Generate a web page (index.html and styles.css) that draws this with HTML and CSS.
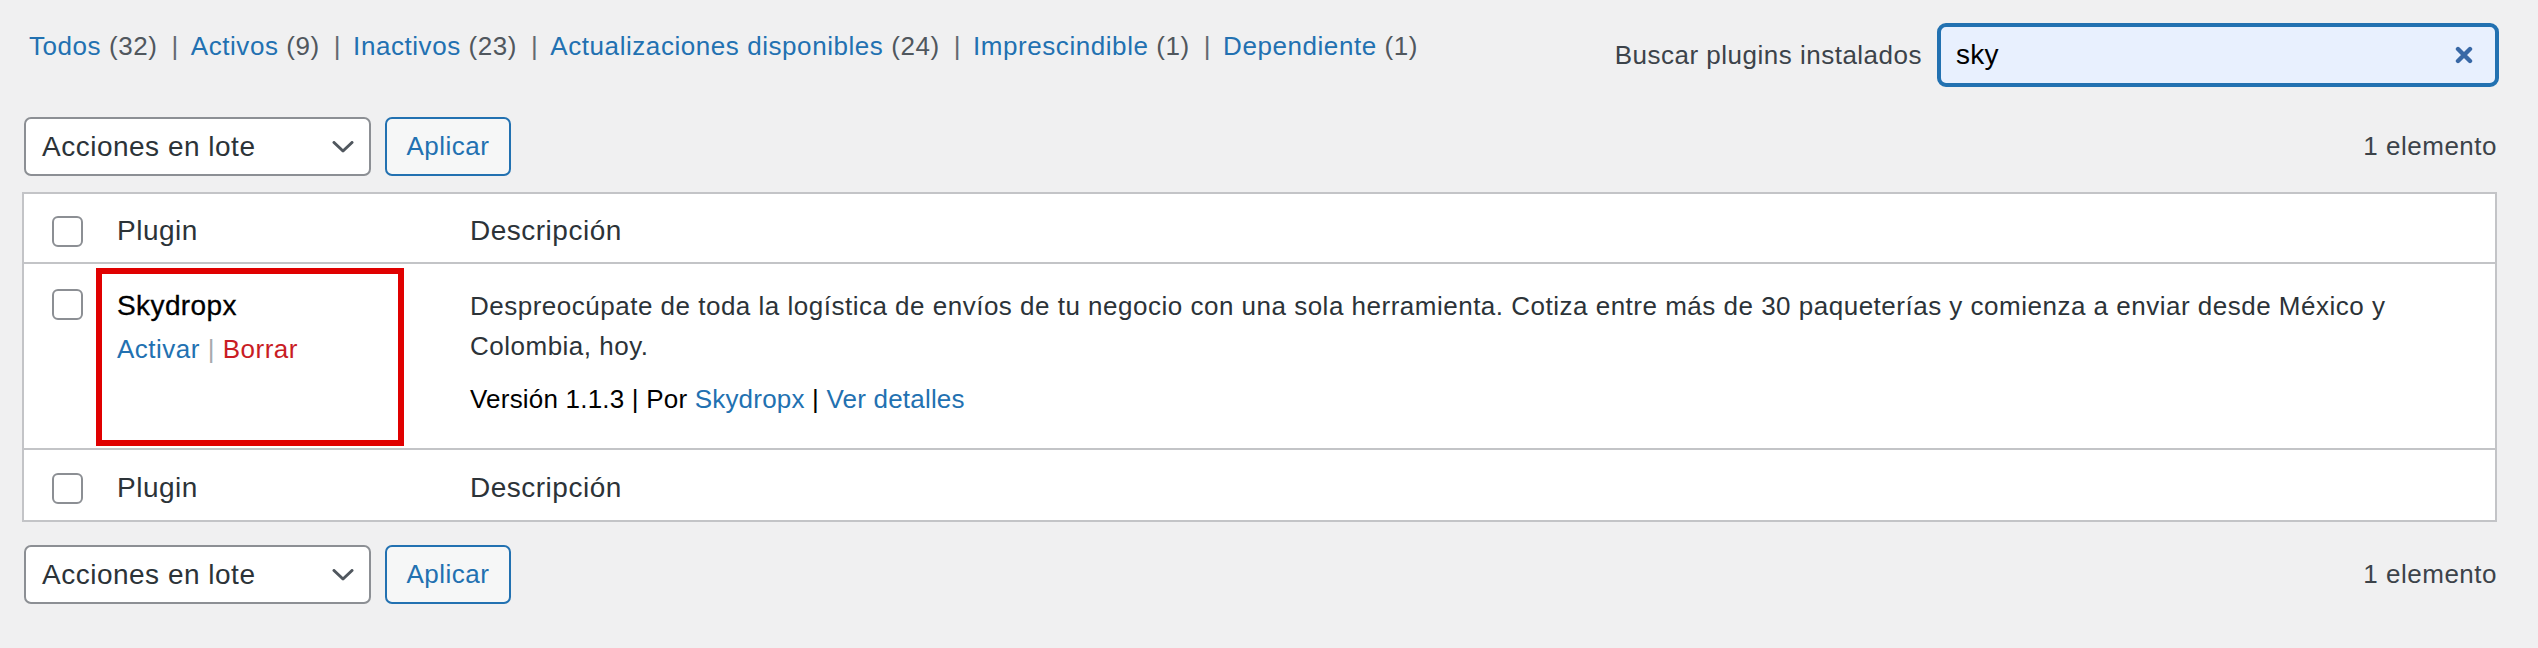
FILE: index.html
```html
<!DOCTYPE html>
<html lang="es">
<head>
<meta charset="utf-8">
<title>Plugins</title>
<link rel="stylesheet" href="styles.css">
</head>
<body>
<div class="wrap">
  <div class="top-row">
    <ul class="subsubsub">
      <li><a href="#">Todos <span class="num">(32)</span></a></li>
      <li class="sep">|</li>
      <li><a href="#">Activos <span class="num">(9)</span></a></li>
      <li class="sep">|</li>
      <li><a href="#">Inactivos <span class="num">(23)</span></a></li>
      <li class="sep">|</li>
      <li><a href="#">Actualizaciones disponibles <span class="num">(24)</span></a></li>
      <li class="sep">|</li>
      <li><a href="#">Imprescindible <span class="num">(1)</span></a></li>
      <li class="sep">|</li>
      <li><a href="#">Dependiente <span class="num">(1)</span></a></li>
    </ul>
    <div class="search-box">
      <label class="search-label">Buscar plugins instalados</label>
      <div class="search-input">
        <span class="search-value">sky</span>
        <svg class="clear-icon" width="18" height="18" viewBox="0 0 18 18" aria-hidden="true">
          <path d="M3 3 L15 15 M15 3 L3 15" stroke="#3868a6" stroke-width="4.4" stroke-linecap="round" fill="none"/>
        </svg>
      </div>
    </div>
  </div>

  <div class="tablenav">
    <div class="bulk">
      <div class="select">
        <span>Acciones en lote</span>
        <svg class="chevron" width="22" height="12" viewBox="0 0 22 12" aria-hidden="true">
          <path d="M2 1.5 L11 10 L20 1.5" stroke="#50575e" stroke-width="3" fill="none" stroke-linecap="round" stroke-linejoin="round"/>
        </svg>
      </div>
      <button class="button">Aplicar</button>
    </div>
    <div class="count">1 elemento</div>
  </div>

  <div class="table">
    <div class="row head">
      <div class="cell check"><span class="checkbox"></span></div>
      <div class="cell col-name">Plugin</div>
      <div class="cell col-desc">Descripción</div>
    </div>
    <div class="row body-row">
      <div class="cell check"><span class="checkbox"></span></div>
      <div class="cell col-name">
        <div class="plugin-title">Skydropx</div>
        <div class="row-actions"><a href="#" class="activate">Activar</a> <span class="pipe">|</span> <a href="#" class="delete">Borrar</a></div>
      </div>
      <div class="cell col-desc">
        <p class="desc">Despreocúpate de toda la logística de envíos de tu negocio con una sola herramienta. Cotiza entre más de 30 paqueterías y comienza a enviar desde México y Colombia, hoy.</p>
        <p class="version">Versión 1.1.3 | Por <a href="#">Skydropx</a> | <a href="#">Ver detalles</a></p>
      </div>
      <div class="highlight"></div>
    </div>
    <div class="row foot">
      <div class="cell check"><span class="checkbox"></span></div>
      <div class="cell col-name">Plugin</div>
      <div class="cell col-desc">Descripción</div>
    </div>
  </div>

  <div class="tablenav bottom">
    <div class="bulk">
      <div class="select">
        <span>Acciones en lote</span>
        <svg class="chevron" width="22" height="12" viewBox="0 0 22 12" aria-hidden="true">
          <path d="M2 1.5 L11 10 L20 1.5" stroke="#50575e" stroke-width="3" fill="none" stroke-linecap="round" stroke-linejoin="round"/>
        </svg>
      </div>
      <button class="button">Aplicar</button>
    </div>
    <div class="count">1 elemento</div>
  </div>
</div>
</body>
</html>
```

FILE: styles.css
```css
* { box-sizing: border-box; }

html, body {
  margin: 0;
  padding: 0;
  background: #f0f0f1;
}

body {
  font-family: "Liberation Sans", Arial, sans-serif;
  font-size: 26px;
  letter-spacing: 0.5px;
  color: #3c434a;
}

a { color: #2271b1; text-decoration: none; }

.wrap {
  padding: 23px 41px 0 22px;
}

/* top row */
.top-row {
  display: flex;
  justify-content: space-between;
  align-items: flex-start;
  height: 64px;
}

.subsubsub {
  list-style: none;
  margin: 4px 0 0 7px;
  padding: 0;
  display: flex;
  line-height: 39px;
  white-space: pre;
  letter-spacing: 0.56px;
}

.subsubsub .num { color: #50575e; }

.subsubsub .sep {
  color: #646970;
  margin: 0 12px 0 14px;
}

.search-box {
  display: flex;
  align-items: center;
  gap: 15px;
  margin-right: -2px;
  height: 64px;
}

.search-label {
  color: #3c434a;
}

.search-input {
  width: 562px;
  height: 64px;
  border: 4px solid #2271b1;
  border-radius: 9px;
  background: #e8f0fe;
  display: flex;
  align-items: center;
  justify-content: space-between;
  padding: 0 22px 0 15px;
  font-size: 28px;
  color: #000;
  letter-spacing: 0.3px;
}

.clear-icon { display: block; }

/* tablenav */
.tablenav {
  display: flex;
  justify-content: space-between;
  align-items: center;
  margin-top: 30px;
  height: 59px;
}

.tablenav.bottom { margin-top: 23px; }

.bulk {
  display: flex;
  gap: 14px;
  margin-left: 2px;
  height: 59px;
}

.select {
  width: 347px;
  height: 59px;
  border: 2px solid #8c8f94;
  border-radius: 7px;
  background: #fff;
  display: flex;
  align-items: center;
  justify-content: space-between;
  padding: 0 15px 0 16px;
  font-size: 28px;
  color: #2c3338;
}

.chevron { display: block; }

.button {
  width: 126px;
  height: 59px;
  border: 2px solid #2271b1;
  border-radius: 7px;
  background: #f6f7f7;
  color: #2271b1;
  font-family: inherit;
  font-size: 26px;
  letter-spacing: 0.5px;
  padding: 0;
}

.count {
  color: #3c434a;
}

/* table */
.table {
  margin-top: 16px;
  border: 2px solid #c3c4c7;
  background: #fff;
  position: relative;
}

.row {
  display: grid;
  grid-template-columns: 76px 352px 1fr;
  position: relative;
}

.row.head, .row.foot {
  height: 70px;
  padding-top: 6px;
  align-items: center;
  font-size: 28px;
  color: #2c3338;
}

.row.head { border-bottom: 2px solid #c3c4c7; }

.row.body-row {
  height: 186px;
  border-bottom: 2px solid #c3c4c7;
  align-items: start;
}

.cell.check {
  padding-left: 28px;
  display: flex;
  align-items: center;
}

.body-row .cell.check { padding-top: 25px; }

.cell.col-name { padding-left: 17px; }
.cell.col-desc { padding-left: 18px; padding-right: 20px; }

.checkbox {
  display: block;
  width: 31px;
  height: 31px;
  border: 2px solid #8c8f94;
  border-radius: 6px;
  background: #fff;
}

.body-row .col-name,
.body-row .col-desc { padding-top: 22px; }

.plugin-title {
  font-size: 28px;
  line-height: 40px;
  color: #000;
  letter-spacing: 0.4px;
  -webkit-text-stroke: 0.3px #000;
}

.row-actions {
  margin-top: 3px;
  line-height: 40px;
}

.row-actions .pipe { color: #a7aaad; }
.row-actions .delete { color: #c91c24; }

.desc {
  margin: 0;
  line-height: 40px;
  color: #2c3338;
}

.version {
  margin: 13px 0 0;
  line-height: 40px;
  color: #000;
  letter-spacing: 0.2px;
}

.highlight {
  position: absolute;
  left: 72px;
  top: 4px;
  width: 308px;
  height: 178px;
  border: 6px solid #e00000;
  pointer-events: none;
}
```
